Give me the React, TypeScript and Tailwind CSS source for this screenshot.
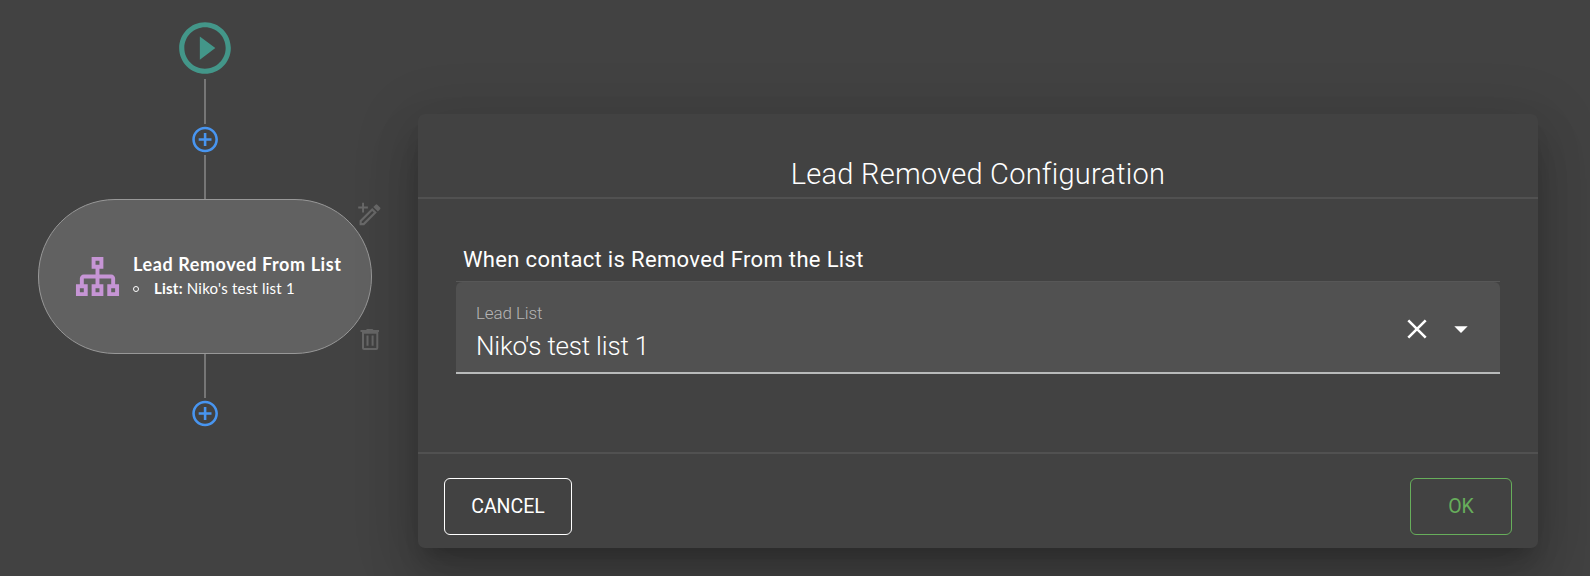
import React from "react";

const Line = ({ h }: { h: string }) => <div className={`w-[2px] bg-[#767676] ${h}`} />;

const PlusCircle = () => (
  <svg viewBox="0 0 24 24" className="h-[31px] w-[30.800px] -translate-x-[0.300px] text-[#4895f0]" fill="currentColor">
    <path d="M13 7h-2v4H7v2h4v4h2v-4h4v-2h-4V7zm-1-5C6.480 2 2 6.480 2 12s4.480 10 10 10 10-4.480 10-10S17.520 2 12 2zm0 18c-4.410 0-8-3.590-8-8s3.590-8 8-8 8 3.590 8 8-3.590 8-8 8z" />
  </svg>
);

const EditIcon = () => (
  <svg viewBox="0 0 24 24" className="absolute top-[2px] left-[319px] size-[24px] text-[#686868]" fill="currentColor">
    <path d="M4.100 0.800h1.900v3.800h3.900v1.900H6v3.900H4.100V6.500H0.200V4.600h3.900z" />
    <path
      fillRule="evenodd"
      d="M1.600 23.200v-4.600L14.200 6l4.600 4.600L6.200 23.200zM3.700 21.100h1.500L15.800 10.600l-1.600-1.600L3.700 19.500z"
    />
    <path d="M15.300 4.900l2.300-2.200q.8-.8 1.700 0l2.800 2.800q.8.900 0 1.700l-2.200 2.300z" />
  </svg>
);

const TrashIcon = () => (
  <svg viewBox="0 0 20 22" className="absolute top-[129px] left-[321px] h-[22px] w-[20px] text-[#666666]" fill="currentColor">
    <path d="M0.500 1h5.500l1-1h5.500l1 1h5.500v1.900H0.500z" />
    <path
      fillRule="evenodd"
      d="M2 2.900h16.300V19q0 2-2 2H4q-2 0-2-2zM4 4.800V19h12.300V4.800z"
    />
    <path d="M6.500 6.400h2v10.400h-2zM11.600 6.400h2v10.400h-2z" />
  </svg>
);

function Flow() {
  return (
    <div className="flex w-[410px] shrink-0 flex-col items-center pt-[17px]">
      <svg viewBox="0 0 24 24" className="size-[62px] text-[#439689]" fill="currentColor">
        <path d="M10 16.500l6-4.500-6-4.500v9zM12 2C6.480 2 2 6.480 2 12s4.480 10 10 10 10-4.480 10-10S17.520 2 12 2zm0 18c-4.410 0-8-3.590-8-8s3.590-8 8-8 8 3.590 8 8-3.590 8-8 8z" />
      </svg>
      <Line h="h-[45px]" />
      <PlusCircle />
      <Line h="h-[44px]" />
      <div className="relative flex h-[155px] w-[334px] items-center rounded-[77px] border border-[#989898] bg-[#616161] pl-[35px] font-['Lato',sans-serif] text-white">
        <svg viewBox="0 0 24 24" className="size-[47px] shrink-0 text-[#c695d5]" fill="currentColor">
          <path d="M9 2V8H11V11H5C3.890 11 3 11.890 3 13V16H1V22H7V16H5V13H11V16H9V22H15V16H13V13H19V16H17V22H23V16H21V13C21 11.890 20.110 11 19 11H13V8H15V2H9M11 4H13V6H11V4M3 18H5V20H3V18M11 18H13V20H11V18M19 18H21V20H19V18Z" />
        </svg>
        <div className="ml-[12px] pb-[2px] whitespace-nowrap">
          <div className="text-[18px] leading-[26px] font-bold tracking-[0.590px]">Lead Removed From List</div>
          <div className="flex items-center text-[15px] leading-[23px] tracking-[0.220px]">
            <span className="mr-[15px] size-[6px] rounded-full border border-white" />
            <span>
              <b>List:</b> Niko's test list 1
            </span>
          </div>
        </div>
        <EditIcon />
        <TrashIcon />
      </div>
      <Line h="h-[44px]" />
      <PlusCircle />
    </div>
  );
}

function ConfigDialog() {
  return (
    <div className="relative mt-[114px] ml-[8px] flex h-[434px] w-[1120px] shrink-0 flex-col rounded-[7px] bg-[#424242] shadow-[0_14px_19px_-9px_rgba(0,0,0,0.2),0_31px_49px_4px_rgba(0,0,0,0.14),0_12px_60px_10px_rgba(0,0,0,0.12)]">
      <div className="flex h-[85px] shrink-0 items-end justify-center border-b-2 border-[#515151] pb-[5px] text-[29px] leading-[36px] font-light tracking-[0.240px]">
        Lead Removed Configuration
      </div>
      <div className="flex h-[253px] shrink-0 flex-col px-[38px] pt-[44px]">
        <div className="h-[38px] pl-[7px] text-[22px] leading-[34px] tracking-[0.340px]">When contact is Removed From the List</div>
        <div className="border-t border-[#575757]">
          <div className="flex h-[92px] justify-between rounded-t-[6px] border-b-2 border-[#b8baba] bg-[#515151] pr-[32px] pl-[20px]">
            <div className="flex flex-col pt-[19px] font-light">
              <span className="text-[17px] leading-[24px] tracking-[-0.100px] text-[#b5b5b5]">Lead List</span>
              <span className="pt-[3px] text-[26px] leading-[36px] tracking-[-0.200px]">Niko's test list 1</span>
            </div>
            <div className="flex items-center gap-[27px] pt-[4px]">
              <svg viewBox="0 0 20 20" className="size-[20px]" fill="none" stroke="currentColor" strokeWidth="2.600">
                <path d="M1.300 1.300l17.400 17.400M18.700 1.300L1.300 18.700" />
              </svg>
              <svg viewBox="0 0 14 7" className="h-[7px] w-[14px]" fill="currentColor">
                <path d="M0.300 0.200h13.400L7 6.900z" />
              </svg>
            </div>
          </div>
        </div>
      </div>
      <div className="flex flex-1 items-start justify-between border-t-2 border-[#515151] px-[26px] pt-[24px] text-[19.500px]">
        <button className="h-[57px] w-[128px] rounded-[6px] border border-white">CANCEL</button>
        <button className="h-[57px] w-[102px] rounded-[6px] border border-[#67ae5b] text-[#67ae5b]">OK</button>
      </div>
    </div>
  );
}

export default function App() {
  return (
    <div className="flex h-[576px] w-[1590px] overflow-hidden bg-[#424242] font-['Roboto',sans-serif] text-white">
      <Flow />
      <ConfigDialog />
    </div>
  );
}
